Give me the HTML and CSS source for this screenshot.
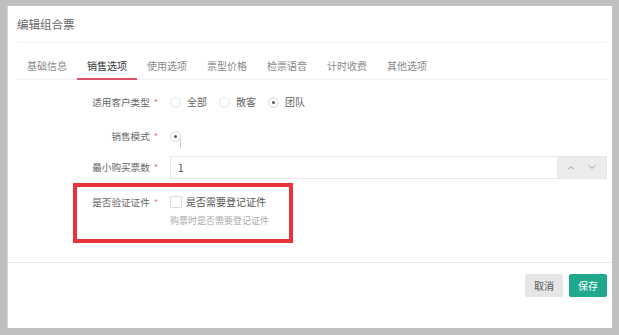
FILE: index.html
```html
<!DOCTYPE html>
<html lang="zh">
<head>
<meta charset="utf-8">
<title>编辑组合票</title>
<link rel="stylesheet" href="styles.css">
</head>
<body>
<div class="frame">
  <div class="panel">
    <div class="content">
      <div class="header"><span class="title">编辑组合票</span></div>
      <div class="tabs">
        <div class="tab">基础信息</div>
        <div class="tab active">销售选项</div>
        <div class="tab">使用选项</div>
        <div class="tab">票型价格</div>
        <div class="tab">检票语音</div>
        <div class="tab">计时收费</div>
        <div class="tab">其他选项</div>
      </div>
      <div class="form">
        <div class="row r1">
          <div class="label">适用客户类型<span class="req">*</span></div>
          <div class="control">
            <label class="opt"><span class="radio"></span><span>全部</span></label>
            <label class="opt"><span class="radio"></span><span>散客</span></label>
            <label class="opt"><span class="radio on"></span><span>团队</span></label>
          </div>
        </div>
        <div class="row r2">
          <div class="label">销售模式<span class="req">*</span></div>
          <div class="control">
            <label class="opt"><span class="radio on"></span><span class="caret"></span></label>
          </div>
        </div>
        <div class="row r3">
          <div class="label">最小购买票数<span class="req">*</span></div>
          <div class="control">
            <div class="number">
              <span class="value">1</span>
              <span class="spin">
                <svg width="8" height="5" viewBox="0 0 8 5"><path d="M1 4.5 L4 1.5 L7 4.5" fill="none" stroke="#999" stroke-width="1"/></svg>
                <svg width="8" height="5" viewBox="0 0 8 5"><path d="M1 0.5 L4 3.5 L7 0.5" fill="none" stroke="#999" stroke-width="1"/></svg>
              </span>
            </div>
          </div>
        </div>
        <div class="row r4">
          <div class="label">是否验证证件<span class="req">*</span></div>
          <div class="control">
            <label class="opt"><span class="check"></span><span class="ctext">是否需要登记证件</span></label>
          </div>
        </div>
        <div class="hint">购票时是否需要登记证件</div>
      </div>
    </div>
    <div class="footer">
      <button class="btn cancel">取消</button>
      <button class="btn save">保存</button>
    </div>
    <div class="mark"></div>
  </div>
</div>
</body>
</html>
```

FILE: styles.css
```css
* { box-sizing: border-box; }
html, body { margin: 0; padding: 0; }
body {
  width: 619px;
  height: 335px;
  overflow: hidden;
  background: #bfbfbf;
  font-family: "Noto Sans CJK SC", "Noto Sans", sans-serif;
  color: #666;
}
.frame {
  padding: 6px 7px 7px 7px;
  height: 335px;
}
.panel {
  position: relative;
  background: #fff;
  height: 322px;
  display: flex;
  flex-direction: column;
  border-left: 1px solid #d6d6d6;
}
.content {
  padding: 0 5px 0 9px;
}
.header {
  height: 37px;
  display: flex;
  align-items: center;
  border-bottom: 1px solid #f2f2f2;
}
.title {
  font-size: 11.5px;
  color: #666;
  line-height: 14px;
}
.tabs {
  display: flex;
  height: 37px;
  border-bottom: 1px solid #f0f0f0;
}
.tab {
  height: 37px;
  padding: 17px 10px 0;
  font-size: 10px;
  line-height: 12px;
  color: #888;
  border-bottom: 2px solid transparent;
  margin-bottom: -1px;
}
.tab.active {
  color: #333;
  border-bottom-color: #e0506a;
}
.form {
  padding-top: 10px;
}
.row {
  display: flex;
  align-items: center;
}
.r1 { height: 24px; }
.r2 { height: 24px; margin-top: 10px; }
.r3 { height: 23px; margin-top: 8px; }
.r4 { height: 24px; margin-top: 11px; }
.label {
  width: 141px;
  text-align: right;
  font-size: 9.6px;
  line-height: 12px;
  color: #666;
  white-space: nowrap;
}
.req {
  color: #e8707e;
  font-size: 9px;
  margin-left: 4px;
}
.control {
  flex: 1;
  margin-left: 12px;
  display: flex;
  align-items: center;
}
.opt {
  display: flex;
  align-items: center;
  font-size: 10px;
  line-height: 12px;
  color: #666;
  margin-right: 12px;
}
.radio {
  width: 11px;
  height: 11px;
  border: 1px solid #e4e4e4;
  border-radius: 50%;
  margin-right: 6px;
  position: relative;
}
.radio.on {
  border-color: #d8d8d8;
}
.radio.on::after {
  content: "";
  position: absolute;
  left: 3px;
  top: 3px;
  width: 3px;
  height: 3px;
  border-radius: 50%;
  background: #555;
}
.caret {
  width: 1px;
  height: 9px;
  background: #c5ccd6;
  margin-left: -7px;
  margin-top: 14px;
}
.number {
  flex: 1;
  height: 23px;
  border: 1px solid #e6e6e6;
  display: flex;
  align-items: center;
}
.value {
  flex: 1;
  font-size: 10px;
  color: #444;
  padding-left: 7px;
}
.spin {
  width: 49px;
  height: 21px;
  background: #ececec;
  display: flex;
  align-items: center;
  justify-content: space-around;
  padding: 0 4px;
}
.check {
  width: 12px;
  height: 12px;
  border: 1px solid #dcdcdc;
  border-radius: 1px;
  margin-right: 4px;
}
.ctext { color: #555; }
.hint {
  padding-left: 153px;
  font-size: 9px;
  line-height: 14px;
  color: #aaa;
}
.footer {
  margin-top: auto;
  height: 66px;
  border-top: 1px solid #ececec;
  display: flex;
  justify-content: flex-end;
  align-items: flex-start;
  padding: 11px 5px 0 0;
  gap: 6px;
}
.btn {
  width: 38px;
  height: 23px;
  border: none;
  border-radius: 2px;
  font-family: "Noto Sans CJK SC", "Noto Sans", sans-serif;
  font-size: 10px;
  line-height: 12px;
  padding: 0;
}
.cancel { background: #e6e6e6; color: #555; }
.save { background: #1fa88c; color: #fff; }
.mark {
  position: absolute;
  left: 65px;
  top: 177px;
  width: 220px;
  height: 60px;
  border: 4px solid #e8323c;
}
```
